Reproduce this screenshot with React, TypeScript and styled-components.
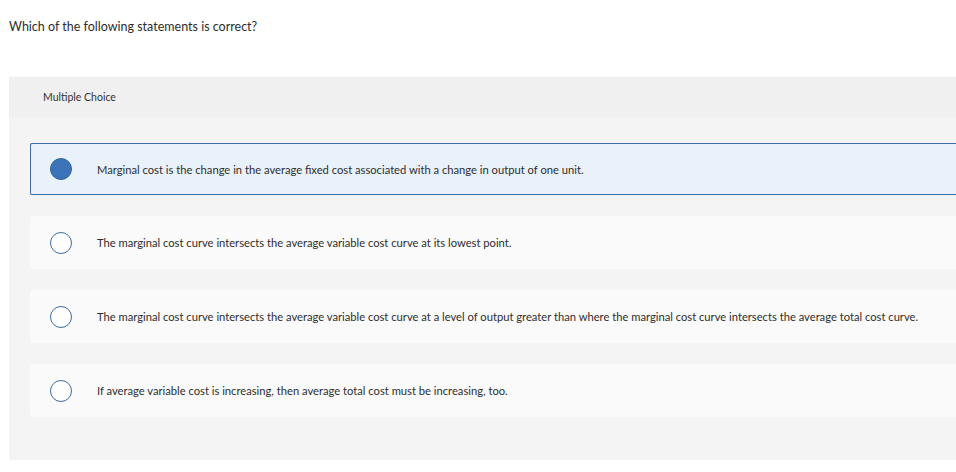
import React from 'react'
import styled, { createGlobalStyle } from 'styled-components'

const GlobalStyle = createGlobalStyle`
  html, body {
    margin: 0;
    padding: 0;
    background: #ffffff;
    overflow: hidden;
  }
  body {
    font-family: Lato, "Open Sans", "Liberation Sans", sans-serif;
    color: #2b2b2b;
  }
`

const Page = styled.div`
  padding: 19px 0 0 9px;
`

const Question = styled.p`
  margin: 0;
  font-size: 12.5px;
  line-height: 16px;
  color: #2d2d2d;
`

const Panel = styled.section`
  margin-top: 42px;
  background: #f4f4f4;
  border-radius: 0 0 0 3px;
`

const PanelHeader = styled.div`
  height: 40px;
  display: flex;
  align-items: center;
  padding-left: 34px;
  background: #f0f0f0;
  font-size: 10.5px;
  color: #333;
`

const OptionList = styled.div`
  display: flex;
  flex-direction: column;
  gap: 21px;
  padding: 26px 0 43px 21px;
`

const Option = styled.div<{ $selected?: boolean }>`
  box-sizing: border-box;
  height: ${({ $selected }) => ($selected ? '52px' : '53px')};
  display: flex;
  align-items: center;
  gap: 25px;
  padding-left: ${({ $selected }) => ($selected ? '19px' : '20px')};
  background: ${({ $selected }) => ($selected ? '#e9f1fb' : '#fafafa')};
  border: ${({ $selected }) => ($selected ? '1px solid #3b6ea6' : 'none')};
  border-right: none;
  border-radius: 2px 0 0 2px;
  overflow: hidden;
`

const Radio = styled.span<{ $checked?: boolean }>`
  box-sizing: border-box;
  flex: none;
  width: 22px;
  height: 22px;
  border-radius: 50%;
  border: 1.3px solid ${({ $checked }) => ($checked ? '#2f619d' : '#3e6d9f')};
  background: ${({ $checked }) => ($checked ? '#3b74b8' : '#ffffff')};
`

const OptionText = styled.span`
  font-size: 11.2px;
  color: #2e2e2e;
  white-space: nowrap;
`

const options = [
  'Marginal cost is the change in the average fixed cost associated with a change in output of one unit.',
  'The marginal cost curve intersects the average variable cost curve at its lowest point.',
  'The marginal cost curve intersects the average variable cost curve at a level of output greater than where the marginal cost curve intersects the average total cost curve.',
  'If average variable cost is increasing, then average total cost must be increasing, too.',
]

const App = () => {
  const selected = 0

  return (
    <>
      <GlobalStyle />
      <Page>
        <Question>Which of the following statements is correct?</Question>
        <Panel>
          <PanelHeader>Multiple Choice</PanelHeader>
          <OptionList>
            {options.map((text, i) => (
              <Option key={i} $selected={i === selected}>
                <Radio $checked={i === selected} />
                <OptionText>{text}</OptionText>
              </Option>
            ))}
          </OptionList>
        </Panel>
      </Page>
    </>
  )
}

export default App
